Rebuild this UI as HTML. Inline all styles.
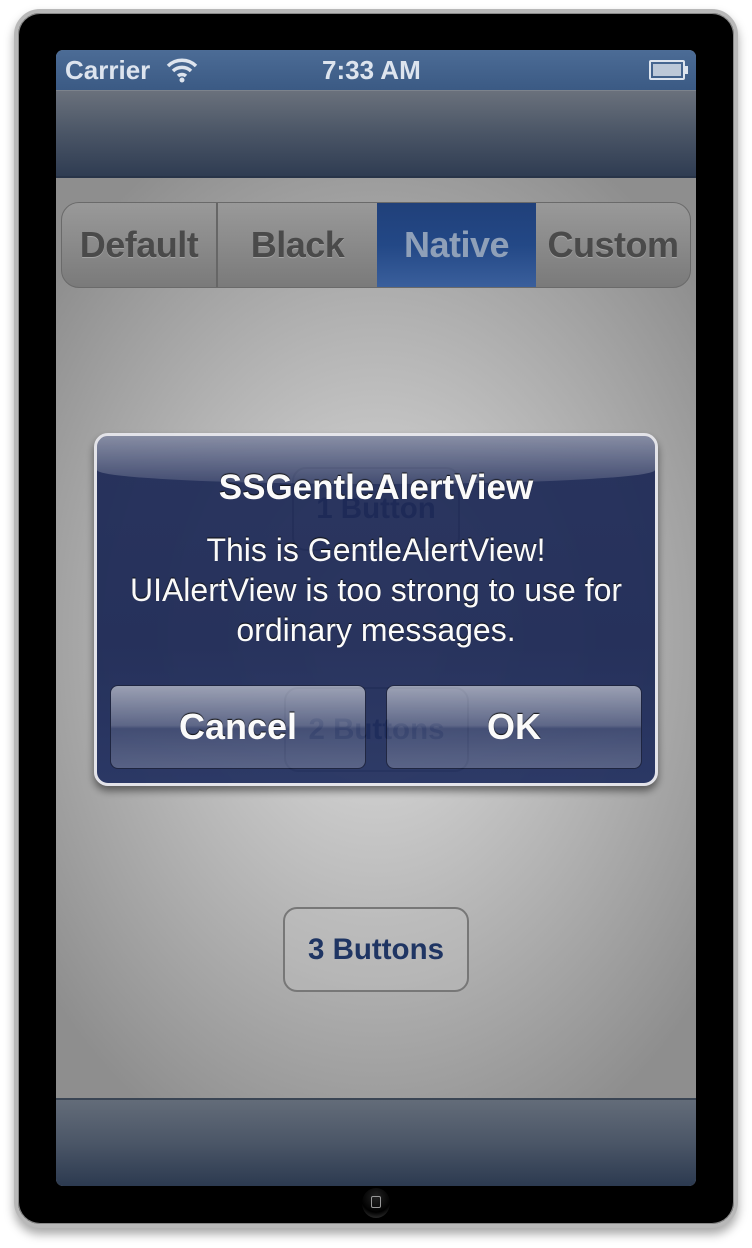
<!DOCTYPE html>
<html><head><style>
*{margin:0;padding:0;box-sizing:border-box}
body{width:752px;height:1248px;background:#fff;position:relative;overflow:hidden;font-family:"Liberation Sans",Arial,sans-serif}
.frame{position:absolute;left:14px;top:9px;width:724px;height:1219px;border-radius:26px;background:#000;border:4px solid #b8b8b8;box-shadow:0 6px 10px rgba(0,0,0,.35),inset 0 0 0 1px #888}
.screen{position:absolute;left:56px;top:50px;width:640px;height:1136px;border-radius:7px;overflow:hidden;background:radial-gradient(ellipse 420px 560px at 50% 52%,#e2e2e2 0%,#b4b4b4 55%,#8e8e8e 100%)}
.status{position:absolute;left:0;top:0;width:640px;height:40px;background:linear-gradient(#4c6c96,#3b5a84);color:#dde4ee;font-weight:bold;font-size:26px}
.nav{position:absolute;left:0;top:40px;width:640px;height:88px;background:linear-gradient(#6a717c,#4a5566 50%,#2f3c52);border-top:1px solid #7c838c;border-bottom:2px solid #283448}
.tool{position:absolute;left:0;top:1048px;width:640px;height:88px;background:linear-gradient(#636c79,#4b5667 50%,#2c3a50);border-top:2px solid #3a4554}
.seg{position:absolute;left:5px;top:152px;width:630px;height:86px;border:1px solid #6a6a6a;border-radius:18px;overflow:hidden;display:flex;background:linear-gradient(#999,#8a8a8a 50%,#7a7a7a)}
.seg div{flex:0 0 auto;height:100%;display:flex;align-items:center;justify-content:center;font-weight:bold;font-size:36px;color:#4a4a4a;text-shadow:0 1px 0 rgba(255,255,255,.25);letter-spacing:-0.5px}
.seg .sel{background:linear-gradient(#20407a,#234886 50%,#3a5f9c);color:#8fa0b8;text-shadow:none}
.btn{position:absolute;border:2px solid #777;border-radius:14px;display:flex;align-items:center;justify-content:center;font-weight:bold;font-size:29.5px;color:#1f3563;background:rgba(200,200,200,.3)}
.alert{position:absolute;left:94px;top:433px;width:564px;height:353px;border:3px solid #e8e8ee;border-radius:14px;background:linear-gradient(#1f2b58,#1c2855 60%,#223060);box-shadow:0 5px 8px rgba(0,0,0,.5);overflow:hidden;color:#fff;text-align:center;opacity:.93}
.gloss{position:absolute;left:0;top:0;width:100%;height:48px;background:linear-gradient(rgba(255,255,255,.45),rgba(255,255,255,.12));border-radius:0 0 50% 50%/0 0 14px 14px}
.abtn{position:absolute;top:249px;width:256px;height:84px;border:1px solid #141b38;border-radius:8px;background:linear-gradient(rgba(255,255,255,.55),rgba(255,255,255,.25) 48%,rgba(255,255,255,.12) 52%,rgba(255,255,255,.22));display:flex;align-items:center;justify-content:center;font-weight:bold;font-size:36px;text-shadow:0 -1px 1px #000}
</style></head><body>
<div class="frame"></div>
<div class="screen">
  <div class="status">
    <span style="position:absolute;left:9px;top:5px">Carrier</span>
    <svg style="position:absolute;left:110px;top:6px" width="32" height="28" viewBox="0 0 32 28"><path d="M2 10 A20 20 0 0 1 30 10" stroke="#dde4ee" stroke-width="3.5" fill="none"/><path d="M7 15 A13 13 0 0 1 25 15" stroke="#dde4ee" stroke-width="3.5" fill="none"/><path d="M12 20 A6 6 0 0 1 20 20" stroke="#dde4ee" stroke-width="3.5" fill="none"/><circle cx="16" cy="24" r="2.5" fill="#dde4ee"/></svg>
    <span style="position:absolute;left:266px;top:5px">7:33 AM</span>
    <div style="position:absolute;left:593px;top:10px;width:36px;height:20px;border:2px solid #dde4ee;border-radius:2px;padding:2px"><div style="width:100%;height:100%;background:#bcc8d8"></div></div>
    <div style="position:absolute;left:629px;top:16px;width:3px;height:8px;background:#dde4ee"></div>
  </div>
  <div class="nav"></div>
  <div class="seg">
    <div style="width:156px;border-right:2px solid #666">Default</div>
    <div style="width:159px">Black</div>
    <div class="sel" style="width:159px">Native</div>
    <div style="width:154px">Custom</div>
  </div>
  <div class="btn" style="left:236px;top:417px;width:168px;height:84px">1 Button</div>
  <div class="btn" style="left:228px;top:637px;width:185px;height:85px">2 Buttons</div>
  <div class="btn" style="left:227px;top:857px;width:186px;height:85px">3 Buttons</div>
  <div class="tool"></div>
</div>
<div class="alert">
  <div class="gloss"></div>
  <div style="position:absolute;left:0;width:100%;top:32px;font-weight:bold;font-size:35px;text-shadow:0 -1px 1px #000">SSGentleAlertView</div>
  <div style="position:absolute;left:0;width:100%;top:94px;font-size:32px;line-height:40px;text-shadow:0 -1px 1px #000">This is GentleAlertView!<br>UIAlertView is too strong to use for<br>ordinary messages.</div>
  <div class="abtn" style="left:13px">Cancel</div>
  <div class="abtn" style="left:289px">OK</div>
</div>
<div style="position:absolute;left:362px;top:1188px;width:28px;height:30px;border-radius:50%;background:radial-gradient(circle at 50% 30%,#222,#000 60%,#444)"></div>
<div style="position:absolute;left:371px;top:1196px;width:10px;height:12px;border:1.5px solid #999;border-radius:2px"></div>
</body></html>
